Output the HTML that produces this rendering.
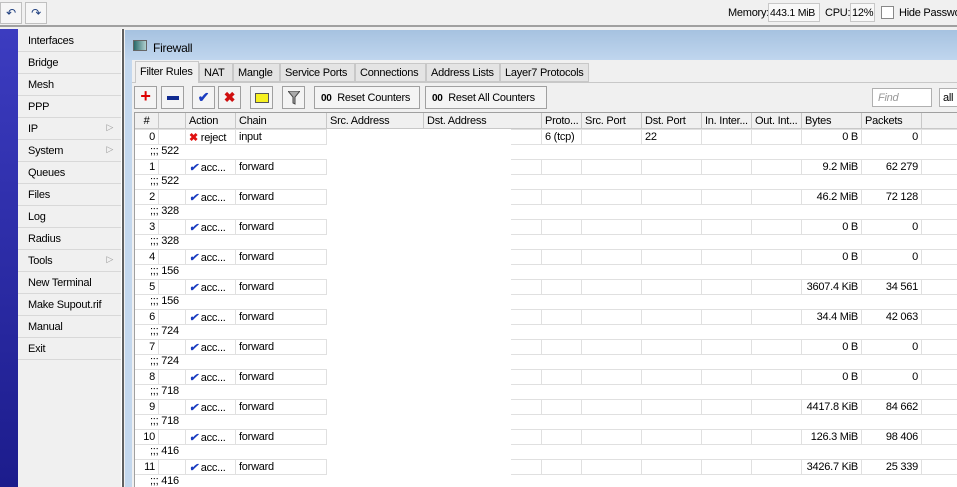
<!DOCTYPE html>
<html><head><meta charset="utf-8"><style>
*{margin:0;padding:0;box-sizing:border-box}
body{width:957px;height:487px;overflow:hidden;background:#f0f0f0;font-family:"Liberation Sans",sans-serif;font-size:11px;letter-spacing:-0.25px;color:#000;position:relative}
div,span{white-space:nowrap}
.a{position:absolute}
.btn{position:absolute;border:1px solid #a0a0a0;background:#f4f4f4;height:23px;top:86px;overflow:hidden}
.mi{position:absolute;left:18px;width:103px;height:22px;border-bottom:1px solid #d8d8d8;padding:5px 0 0 10px}
.arr{position:absolute;right:8px;top:4px;color:#999;font-size:9px}
.tab{position:absolute;top:63px;height:19px;border:1px solid #c8c8c8;background:#e4e4e4;padding:3px 4px 0}
.hd{position:absolute;top:113px;height:16px;border-right:1px solid #c8c8c8;border-bottom:1px solid #c8c8c8;padding:2px 3px;background:#f0f0f0;overflow:hidden}
.r{position:absolute;left:135px;width:822px;height:15px}
.c{position:absolute;top:0;height:14px;border-right:1px solid #e0e0e0;padding:1px 3px;overflow:hidden}
.rt{text-align:right}
</style></head><body>
<div class="a" style="left:0;top:0;width:957px;height:27px;border-bottom:2px solid #a0a0a0;background:#f0f0f0"></div>
<div class="a" style="left:0;top:2px;width:22px;height:22px;border:1px solid #c0c0c0;background:#f6f6f6;text-align:center;color:#204080;font-size:12px;line-height:20px">↶</div>
<div class="a" style="left:25px;top:2px;width:22px;height:22px;border:1px solid #c0c0c0;background:#f6f6f6;text-align:center;color:#204080;font-size:12px;line-height:20px">↷</div>
<div class="a" style="left:728px;top:7px">Memory:</div>
<div class="a" style="left:768px;top:3px;width:52px;height:19px;border:1px solid #c8c8c8;background:#f8f8f8;padding:3px 1px;font-size:10.5px">443.1 MiB</div>
<div class="a" style="left:825px;top:7px">CPU:</div>
<div class="a" style="left:850px;top:3px;width:25px;height:19px;border:1px solid #c8c8c8;background:#f8f8f8;padding:3px 1px">12%</div>
<div class="a" style="left:881px;top:6px;width:13px;height:13px;border:1px solid #888;background:#fff"></div>
<div class="a" style="left:899px;top:7px">Hide Passwords</div>
<div class="a" style="left:0;top:29px;width:18px;height:458px;background:linear-gradient(#3c3cc0,#1c1c8c)"></div>
<div class="a" style="left:18px;top:29px;width:104px;height:458px;background:#f0f0f0"></div>
<div class="mi" style="top:30px">Interfaces</div>
<div class="mi" style="top:52px">Bridge</div>
<div class="mi" style="top:74px">Mesh</div>
<div class="mi" style="top:96px">PPP</div>
<div class="mi" style="top:118px">IP<span class="arr">▷</span></div>
<div class="mi" style="top:140px">System<span class="arr">▷</span></div>
<div class="mi" style="top:162px">Queues</div>
<div class="mi" style="top:184px">Files</div>
<div class="mi" style="top:206px">Log</div>
<div class="mi" style="top:228px">Radius</div>
<div class="mi" style="top:250px">Tools<span class="arr">▷</span></div>
<div class="mi" style="top:272px">New Terminal</div>
<div class="mi" style="top:294px">Make Supout.rif</div>
<div class="mi" style="top:316px">Manual</div>
<div class="mi" style="top:338px">Exit</div>
<div class="a" style="left:121px;top:29px;width:3px;height:458px;background:#fff;border-right:2px solid #606060"></div>
<div class="a" style="left:125px;top:30px;width:832px;height:457px;background:#c4d8ee"></div>
<div class="a" style="left:125px;top:30px;width:832px;height:30px;background:linear-gradient(#a6c2e0,#c0d6ee)"></div>
<div class="a" style="left:133px;top:40px;width:14px;height:11px;border:1px solid #666;background:linear-gradient(90deg,#2a6a6a,#b0d0d0)"></div>
<div class="a" style="left:153px;top:41px;font-size:12px">Firewall</div>
<div class="a" style="left:132px;top:60px;width:825px;height:427px;background:#f0f0f0"></div>
<div class="a" style="left:132px;top:82px;width:825px;height:1px;background:#c8c8c8"></div>
<div class="tab" style="left:135px;top:61px;height:22px;background:#f0f0f0;border-bottom:none;padding-top:4px;width:64px">Filter Rules</div>
<div class="tab" style="left:199px;width:34px">NAT</div>
<div class="tab" style="left:233px;width:47px">Mangle</div>
<div class="tab" style="left:280px;width:75px">Service Ports</div>
<div class="tab" style="left:355px;width:71px">Connections</div>
<div class="tab" style="left:426px;width:74px">Address Lists</div>
<div class="tab" style="left:500px;width:89px">Layer7 Protocols</div>
<div class="btn" style="left:134px;width:23px;color:#d00;font-weight:bold;font-size:18px;text-align:center;line-height:19px">+</div>
<div class="btn" style="left:161px;width:23px"><div class="a" style="left:5px;top:9px;width:12px;height:4px;background:#102a90"></div></div>
<div class="btn" style="left:192px;width:23px;color:#1a3cc0;font-weight:bold;font-size:14px;text-align:center;line-height:20px">✔</div>
<div class="btn" style="left:218px;width:23px;color:#d01010;font-weight:bold;font-size:14px;text-align:center;line-height:20px">✖</div>
<div class="btn" style="left:250px;width:23px"><div class="a" style="left:4px;top:6px;width:14px;height:10px;background:#f6f020;border:1px solid #555"></div></div>
<div class="btn" style="left:282px;width:23px"><svg class="a" style="left:5px;top:4px" width="12" height="14"><path d="M0 0H12L7 6V13L5 12V6Z" fill="#aaa" stroke="#444"/></svg></div>
<div class="btn" style="left:314px;width:106px;padding:5px 6px"><b style="font-size:10px">00</b>&nbsp; Reset Counters</div>
<div class="btn" style="left:425px;width:122px;padding:5px 6px"><b style="font-size:10px">00</b>&nbsp; Reset All Counters</div>
<div class="a" style="left:872px;top:88px;width:60px;height:19px;border:1px solid #b0b0b0;background:#fff;color:#999;font-style:italic;padding:3px 5px">Find</div>
<div class="a" style="left:939px;top:88px;width:20px;height:19px;border:1px solid #b0b0b0;background:#fff;padding:3px 3px">all</div>
<div class="a" style="left:134px;top:112px;width:823px;height:375px;background:#fff;border-left:1px solid #a0a0a0;border-top:1px solid #a0a0a0"></div>
<div class="hd" style="left:135px;width:24px;text-align:center">#</div>
<div class="hd" style="left:159px;width:27px"></div>
<div class="hd" style="left:186px;width:50px">Action</div>
<div class="hd" style="left:236px;width:91px">Chain</div>
<div class="hd" style="left:327px;width:97px">Src. Address</div>
<div class="hd" style="left:424px;width:118px">Dst. Address</div>
<div class="hd" style="left:542px;width:40px">Proto...</div>
<div class="hd" style="left:582px;width:60px">Src. Port</div>
<div class="hd" style="left:642px;width:60px">Dst. Port</div>
<div class="hd" style="left:702px;width:50px">In. Inter...</div>
<div class="hd" style="left:752px;width:50px">Out. Int...</div>
<div class="hd" style="left:802px;width:60px">Bytes</div>
<div class="hd" style="left:862px;width:60px">Packets</div>
<div class="hd" style="left:922px;width:35px;border-right:none"></div>
<div id="rows"></div>
<div class="a" style="left:327px;top:129px;width:184px;height:358px;background:#fff"></div>
<script>
var d=[["0","reject","input","6 (tcp)","22","0 B","0","522"],["1","acc...","forward","","","9.2 MiB","62 279","522"],["2","acc...","forward","","","46.2 MiB","72 128","328"],["3","acc...","forward","","","0 B","0","328"],["4","acc...","forward","","","0 B","0","156"],["5","acc...","forward","","","3607.4 KiB","34 561","156"],["6","acc...","forward","","","34.4 MiB","42 063","724"],["7","acc...","forward","","","0 B","0","724"],["8","acc...","forward","","","0 B","0","718"],["9","acc...","forward","","","4417.8 KiB","84 662","718"],["10","acc...","forward","","","126.3 MiB","98 406","416"],["11","acc...","forward","","","3426.7 KiB","25 339","416"]];
var cols=[[0,24],[24,27],[51,50],[101,91],[192,97],[289,118],[407,40],[447,60],[507,60],[567,50],[617,50],[667,60],[727,60],[787,35]];
var h="";
d.forEach(function(r,i){var y=129+i*30;
var ic=r[1]=="reject"?'<span style="color:#e01010;font-weight:bold">✖</span>':'<span style="color:#1a3cc0;font-weight:bold;font-style:italic">✔</span>';
var v=[[r[0],"rt"],["",""],[ic+" "+r[1],""],[r[2],""],["",""],["",""],[r[3],""],["",""],[r[4],""],["",""],["",""],[r[5],"rt"],[r[6],"rt"],["",""]];
h+='<div class="r" style="top:'+y+'px;border-top:1px solid #e0e0e0;border-bottom:1px solid #e0e0e0;height:16px">';
cols.forEach(function(c,j){h+='<div class="c '+v[j][1]+'" style="left:'+c[0]+'px;width:'+c[1]+'px;'+(j==13?'border-right:none':'')+'">'+v[j][0]+'</div>';});
h+='</div><div class="a" style="left:150px;top:'+(y+16)+'px">;;; '+r[7]+'</div>';});
document.getElementById("rows").innerHTML=h;
</script>
</body></html>
